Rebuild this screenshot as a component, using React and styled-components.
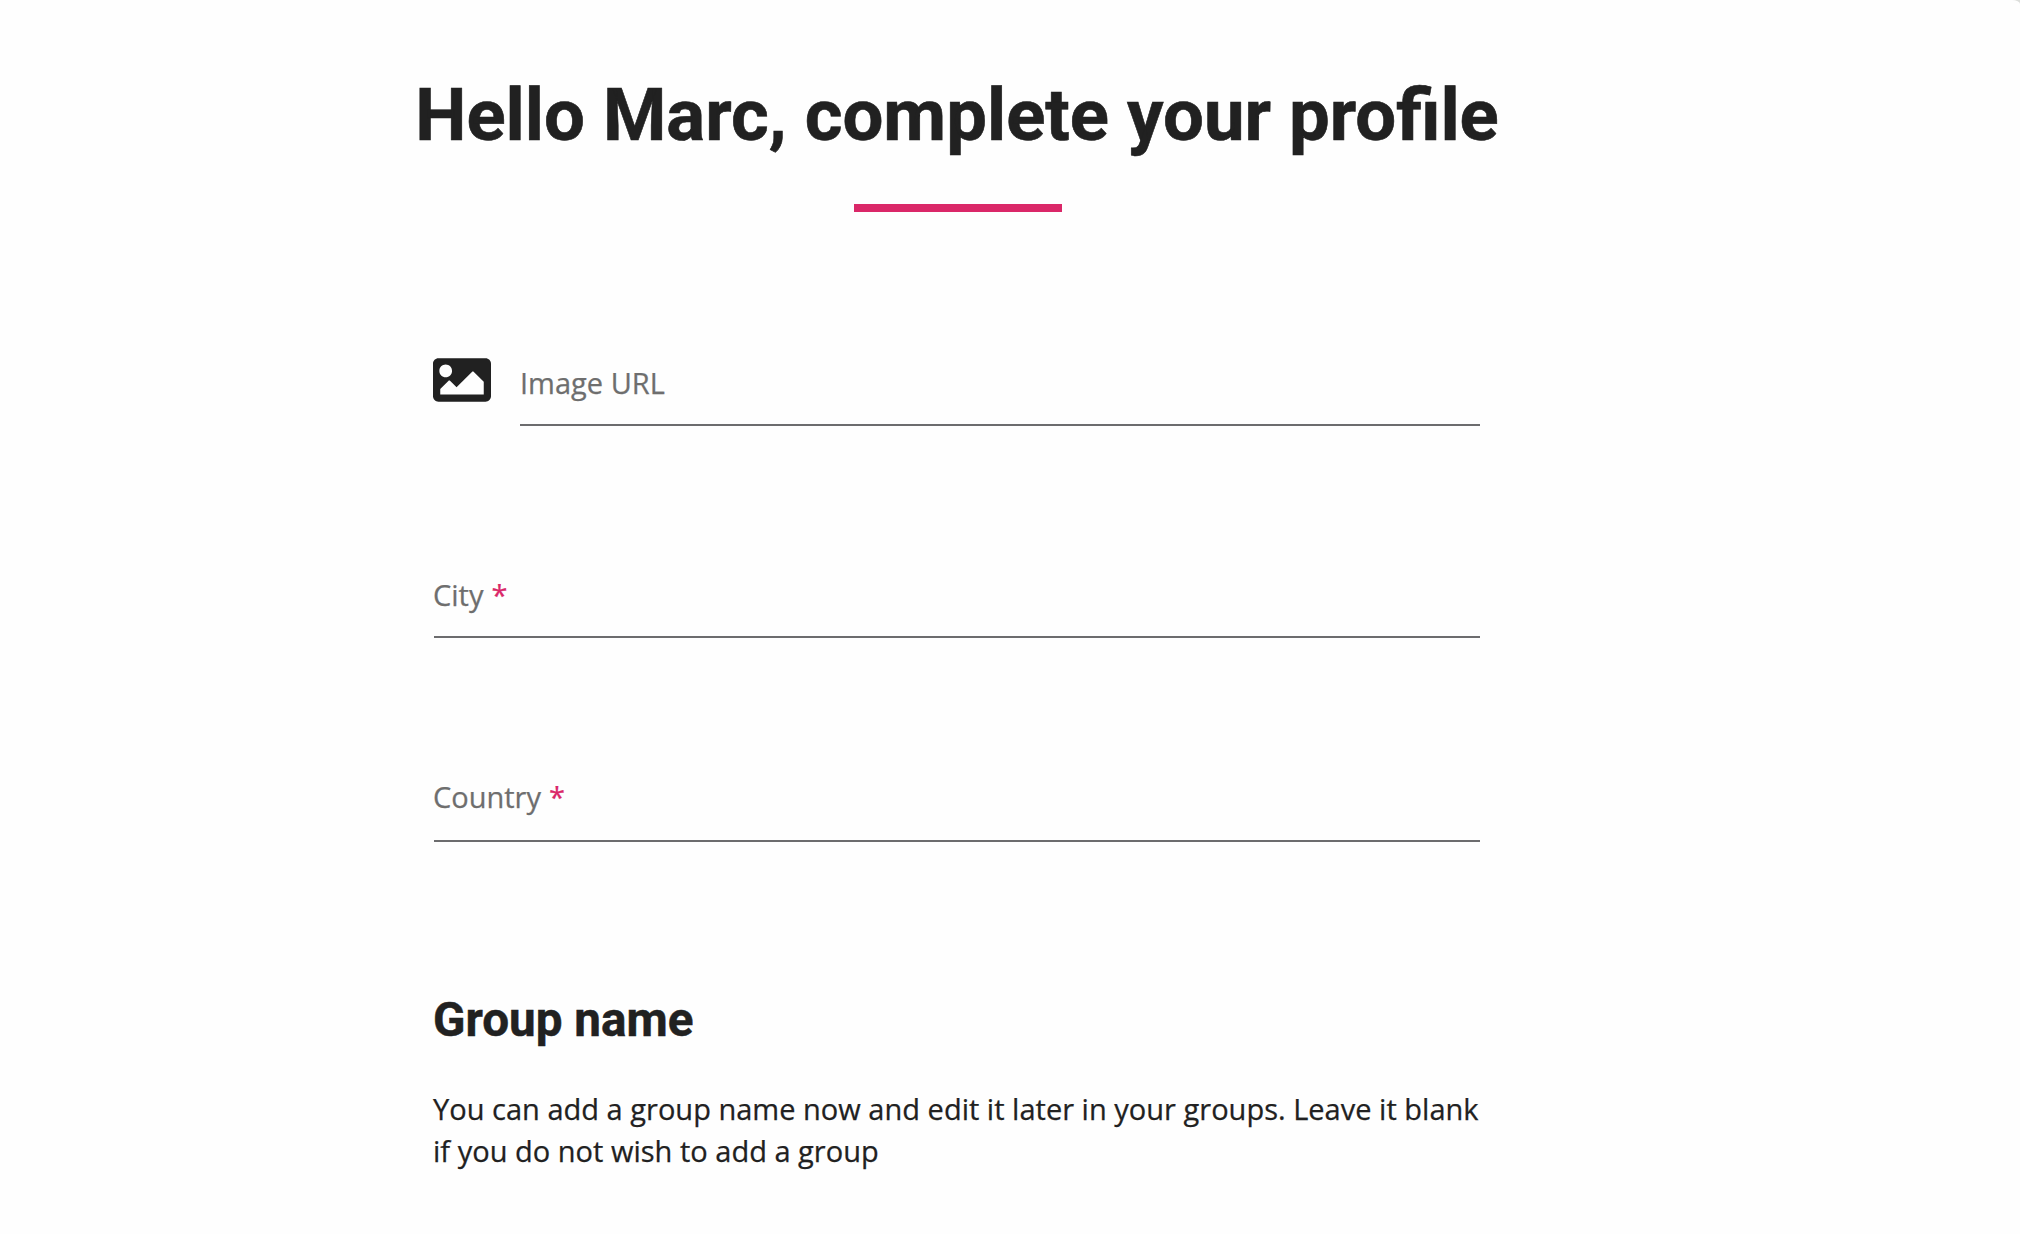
import React from "react";
import styled, { createGlobalStyle } from "styled-components";
import { FaImage } from "react-icons/fa";

const GlobalStyle = createGlobalStyle`
  * { box-sizing: border-box; }
  html, body { margin: 0; padding: 0; background: #dcdedb; }
`;

const Page = styled.main`
  height: 1234px;
  overflow: hidden;
  padding: 63px 0 0 434px;
  background: #fefefe;
  border-top-right-radius: 8px 4px;
  font-family: "Open Sans", sans-serif;
  font-size: 29px;
  color: #212121;
  -webkit-text-stroke: 0.25px;
`;

const Header = styled.header`
  display: flex;
  flex-direction: column;
  align-items: center;
  width: 1048px;
`;

const Title = styled.h1`
  margin: 0 2px 0 0;
  font: 700 72.5px/106px Roboto, sans-serif;
  white-space: nowrap;
  -webkit-text-stroke: 0.6px;
`;

const Accent = styled.div`
  width: 208px;
  height: 8px;
  margin-top: 35px;
  background: #da2768;
`;

const Form = styled.form`
  width: 1046px;
  padding-top: 142px;
`;

const FieldRow = styled.div`
  display: flex;
  align-items: flex-start;
  height: ${(p) => p.$height}px;
`;

const ImageIcon = styled(FaImage)`
  flex: none;
  width: 58px;
  height: 58px;
  margin: -2.75px 29px 0 -1px;
  color: #212121;
`;

const Field = styled.label`
  display: flex;
  align-items: flex-start;
  flex: 1;
  height: ${(p) => p.$height}px;
  padding-top: ${(p) => p.$offset || 0}px;
  border-bottom: 2px solid #6c6c6e;
  line-height: 42px;
  color: #6e6e6e;
`;

const LabelText = styled.span`
  margin-left: -1px;
`;

const Required = styled.span`
  margin-left: 8px;
  color: #da2768;
`;

const GroupTitle = styled.h2`
  margin: 0 0 0 -1px;
  font: 700 47.6px/62px Roboto, sans-serif;
  -webkit-text-stroke: 0.5px;
`;

const Help = styled.p`
  margin: 37px 0 0 -1px;
  line-height: 42px;
  letter-spacing: 0.013px;
  white-space: nowrap;
`;

export default function App() {
  return (
    <Page>
      <GlobalStyle />
      <Header>
        <Title>Hello Marc, complete your profile</Title>
        <Accent />
      </Header>
      <Form>
        <FieldRow $height={220}>
          <ImageIcon />
          <Field $height={72} $offset={8}>Image URL</Field>
        </FieldRow>
        <FieldRow $height={202}>
          <Field $height={64}><LabelText>City</LabelText><Required>*</Required></Field>
        </FieldRow>
        <FieldRow $height={213}>
          <Field $height={66}><LabelText>Country</LabelText><Required>*</Required></Field>
        </FieldRow>
        <GroupTitle>Group name</GroupTitle>
        <Help>
          You can add a group name now and edit it later in your groups. Leave it blank<br />
          if you do not wish to add a group
        </Help>
      </Form>
    </Page>
  );
}
